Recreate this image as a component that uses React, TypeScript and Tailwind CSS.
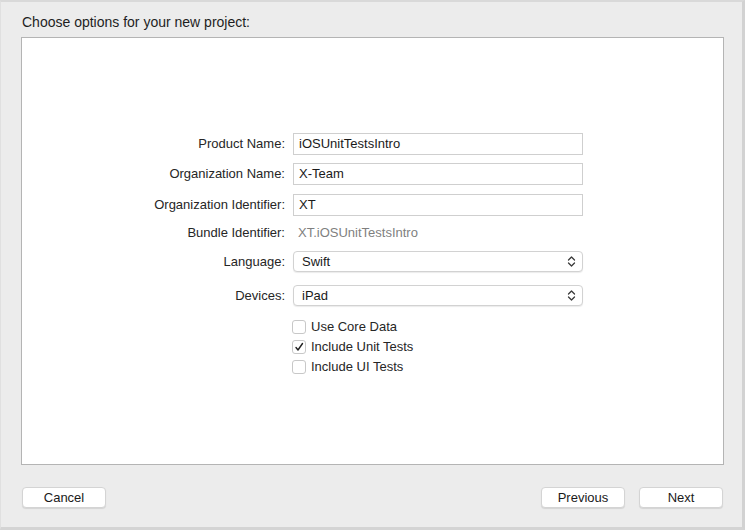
import React from "react";

const font = { fontFamily: '"Liberation Sans", Arial, sans-serif' };

function Label({ children }: { children: React.ReactNode }) {
    return <div className="w-[263px] shrink-0 text-right text-[13px] text-[#262626]">{children}</div>;
}

function TextField({ value }: { value: string }) {
    return (
        <div className="w-[290px] h-[22px] border border-[#cfcfcf] bg-white flex items-center px-[5px] text-[13px] text-[#1a1a1a]">
            {value}
        </div>
    );
}

function Popup({ value }: { value: string }) {
    return (
        <div className="w-[290px] h-[21px] rounded-[4px] border border-[#d2d2d2] bg-white shadow-[0_1px_1px_rgba(0,0,0,0.08)] flex items-center justify-between pl-[8px] pr-[6px] text-[13px] text-[#1a1a1a]">
            <span>{value}</span>
            <svg width="9" height="13" viewBox="0 0 9 13" fill="none" stroke="#3a3a3a" strokeWidth="1.3" strokeLinecap="round" strokeLinejoin="round">
                <path d="M1.5 5 L4.5 2 L7.5 5" />
                <path d="M1.5 8 L4.5 11 L7.5 8" />
            </svg>
        </div>
    );
}

function Check({ label, checked }: { label: string; checked?: boolean }) {
    return (
        <div className="flex items-center h-[20px] pl-[270px]">
            <div className="w-[14px] h-[14px] rounded-[3px] border border-[#c8c8c8] bg-white flex items-center justify-center">
                {checked && (
                    <svg width="10" height="10" viewBox="0 0 10 10" fill="none" stroke="#222" strokeWidth="1.4" strokeLinecap="round" strokeLinejoin="round">
                        <path d="M2 5.5 L4 8 L8.5 1.5" />
                    </svg>
                )}
            </div>
            <span className="ml-[5px] text-[13px] text-[#262626]">{label}</span>
        </div>
    );
}

function Button({ children }: { children: React.ReactNode }) {
    return (
        <button className="w-[84px] h-[21px] rounded-[4px] border border-[#d4d4d4] bg-white shadow-[0_1px_1px_rgba(0,0,0,0.1)] text-[13px] text-[#1a1a1a] flex items-center justify-center">
            {children}
        </button>
    );
}

export default function App() {
    return (
        <div style={font} className="w-[745px] h-[530px] bg-[#ececec] border-t-2 border-t-[#d9d9d9] border-l border-l-[#e0e0e0] border-r-[3px] border-r-[#d2d2d2] border-b-[3px] border-b-[#d4d4d4] flex flex-col">
            <div className="h-[35px] pl-[21px] pt-[10px] text-[14px] text-[#1e1e1e]">Choose options for your new project:</div>
            <div className="ml-[20px] w-[703px] h-[428px] bg-white border border-[#b4b4b4] pt-[95px] flex flex-col">
                <div className="flex items-center gap-[8px]">
                    <Label>Product Name:</Label>
                    <TextField value="iOSUnitTestsIntro" />
                </div>
                <div className="flex items-center gap-[8px] mt-[8px]">
                    <Label>Organization Name:</Label>
                    <TextField value="X-Team" />
                </div>
                <div className="flex items-center gap-[8px] mt-[9px]">
                    <Label>Organization Identifier:</Label>
                    <TextField value="XT" />
                </div>
                <div className="flex items-center gap-[8px] mt-[6px] h-[22px]">
                    <Label>Bundle Identifier:</Label>
                    <div className="pl-[5px] text-[13px] text-[#7f7f7f]">XT.iOSUnitTestsIntro</div>
                </div>
                <div className="flex items-center gap-[8px] mt-[7px]">
                    <Label>Language:</Label>
                    <Popup value="Swift" />
                </div>
                <div className="flex items-center gap-[8px] mt-[13px]">
                    <Label>Devices:</Label>
                    <Popup value="iPad" />
                </div>
                <div className="mt-[11px] flex flex-col">
                    <Check label="Use Core Data" />
                    <Check label="Include Unit Tests" checked />
                    <Check label="Include UI Tests" />
                </div>
            </div>
            <div className="flex items-center justify-between pl-[21px] pr-[19px] mt-[22px]">
                <Button>Cancel</Button>
                <div className="flex gap-[14px]">
                    <Button>Previous</Button>
                    <Button>Next</Button>
                </div>
            </div>
        </div>
    );
}
